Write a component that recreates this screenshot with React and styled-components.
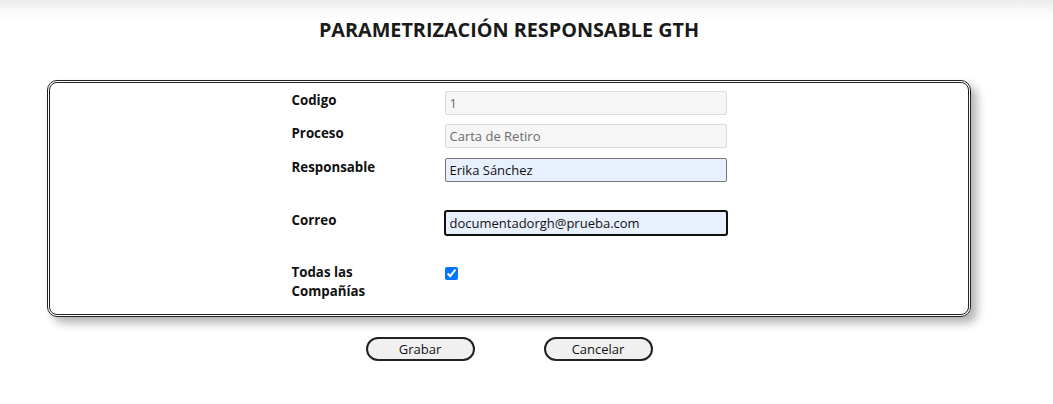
import styled, { createGlobalStyle } from "styled-components";

const GlobalStyle = createGlobalStyle`
    html, body {
        margin: 0;
        padding: 0;
        font-family: "Open Sans", "Noto Sans", sans-serif;
        color: #111;
    }
    body {
        min-height: 404px;
        background: linear-gradient(to bottom, #ececec 0px, #fafafa 12px, #ffffff 20px);
    }
`;

const Page = styled.div`
    width: 1018px;
`;

const Title = styled.h1`
    margin: 0;
    padding-top: 16px;
    text-align: center;
    font-size: 19.8px;
    font-weight: 700;
    line-height: 28px;
    color: #1a1a1a;
`;

const Card = styled.div`
    margin: 36px 47px 0;
    border: 3px double #222;
    border-radius: 10px;
    box-shadow: 6px 6px 10px rgba(0, 0, 0, 0.3);
    padding: 8px 0 13px;
    display: flex;
    flex-direction: column;
    align-items: center;
`;

const Row = styled.div`
    display: grid;
    grid-template-columns: 110px 282px;
    column-gap: 43px;
    align-items: start;
    margin-top: ${p => p.$gap || 0}px;
`;

const Label = styled.label`
    font-size: 13.3px;
    font-weight: 700;
    line-height: 19px;
    color: #111;
`;

const Input = styled.input`
    box-sizing: border-box;
    width: 282px;
    height: 24px;
    margin: 0;
    padding: 0 4px;
    font-family: "Open Sans", "Noto Sans", sans-serif;
    font-size: 13px;
    color: ${p => (p.disabled ? "#6b6b6b" : "#111")};
    background: ${p => (p.disabled ? "#f6f6f6" : "#e8f0fe")};
    border: 1px solid ${p => (p.disabled ? "#dcdcdc" : "#767676")};
    border-radius: 2px;
    outline: ${p => (p.$focused ? "2px solid #111" : "none")};
    outline-offset: -1px;
`;

const Check = styled.input`
    margin: 1px 0 0;
    width: 13px;
    height: 13px;
    accent-color: #0075ff;
`;

const Actions = styled.div`
    display: flex;
    justify-content: center;
    gap: 69px;
    margin-top: 20px;
`;

const Button = styled.button`
    width: 109px;
    height: 24px;
    font-family: "Open Sans", "Noto Sans", sans-serif;
    font-size: 13px;
    color: #111;
    background: #f0f0f0;
    border: 2px solid #222;
    border-radius: 12px;
    padding: 0;
`;

export default function App() {
    return (
        <Page>
            <GlobalStyle />
            <Title>PARAMETRIZACIÓN RESPONSABLE GTH</Title>
            <Card>
                <Row>
                    <Label>Codigo</Label>
                    <Input disabled value="1" readOnly />
                </Row>
                <Row $gap={9}>
                    <Label>Proceso</Label>
                    <Input disabled value="Carta de Retiro" readOnly />
                </Row>
                <Row $gap={10}>
                    <Label>Responsable</Label>
                    <Input value="Erika Sánchez" readOnly />
                </Row>
                <Row $gap={29}>
                    <Label>Correo</Label>
                    <Input $focused value="documentadorgh@prueba.com" readOnly />
                </Row>
                <Row $gap={28}>
                    <Label>Todas las Compañías</Label>
                    <div><Check type="checkbox" defaultChecked /></div>
                </Row>
            </Card>
            <Actions>
                <Button>Grabar</Button>
                <Button>Cancelar</Button>
            </Actions>
        </Page>
    );
}
